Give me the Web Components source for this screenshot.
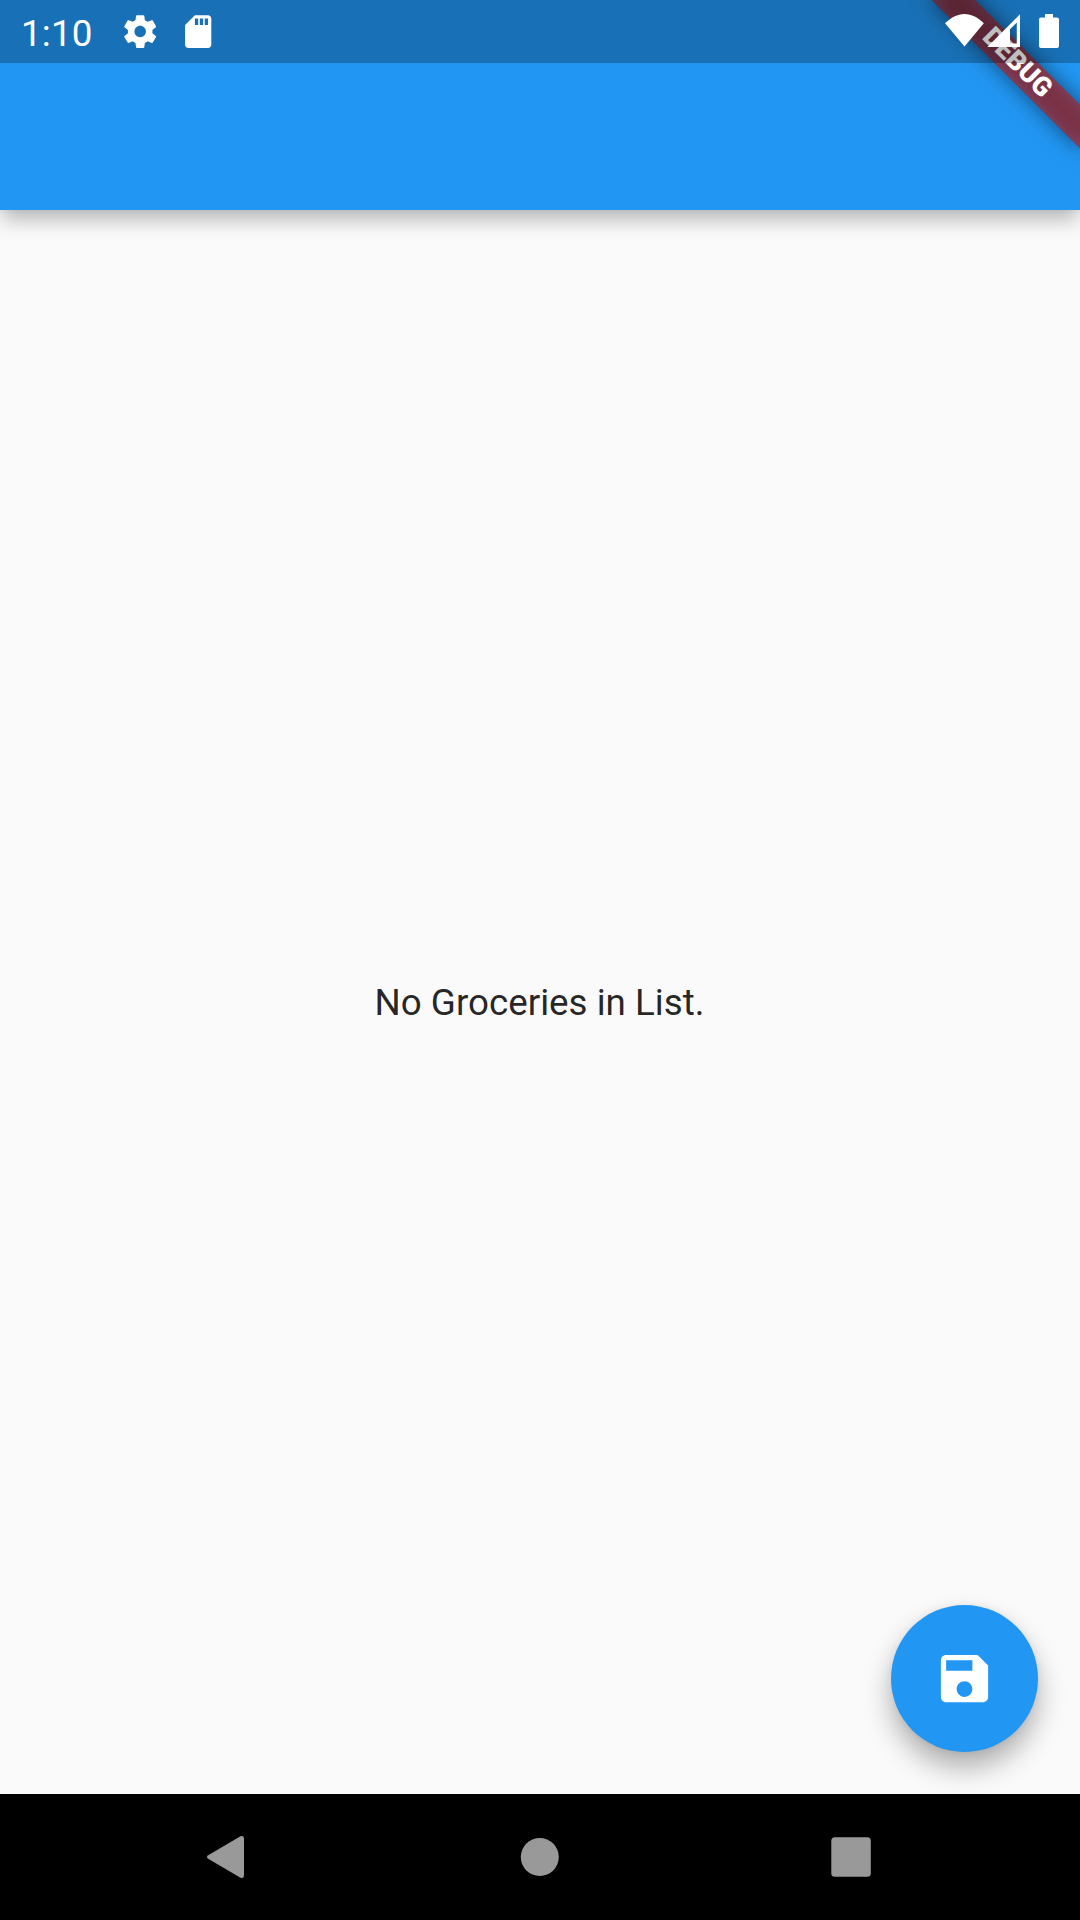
<!DOCTYPE html>
<html lang="en">
<head>
<meta charset="utf-8">
<title>Groceries</title>
<style>
body { margin: 0; background: #fafafa; }
</style>
</head>
<body>
<grocery-app></grocery-app>
<script>
function define(name, html) {
  const template = document.createElement('template');
  template.innerHTML = html;
  customElements.define(name, class extends HTMLElement {
    constructor() {
      super();
      this.attachShadow({ mode: 'open' }).append(template.content.cloneNode(true));
    }
  });
}

define('status-bar', `
<style>
:host { display: flex; justify-content: space-between; height: 63px; box-sizing: border-box; background: rgba(0,0,0,.25); color: #fff; position: relative; z-index: 3; }
.side { display: flex; align-items: center; height: 63px; }
.start { padding-left: 21px; }
.end { padding-right: 20px; }
time { font: 400 36.75px/43px Roboto, sans-serif; letter-spacing: .2px; margin-top: 3px; width: 99px; }
svg { display: block; fill: #fff; }
.icons { width: 100px; height: 63px; }
</style>
<div class="side start">
  <time>1:10</time>
  <svg class="icons" viewBox="120 0 100 63">
    <path transform="translate(120.500 11.900) scale(1.640)" d="M19.43 12.98c.04-.32.07-.64.07-.98s-.03-.66-.07-.98l2.11-1.65c.19-.15.24-.42.12-.64l-2-3.46c-.12-.22-.39-.3-.61-.22l-2.49 1c-.52-.4-1.08-.73-1.69-.98l-.38-2.65C14.46 2.18 14.25 2 14 2h-4c-.25 0-.46.18-.49.42l-.38 2.65c-.61.25-1.17.59-1.69.98l-2.49-1c-.23-.09-.49 0-.61.22l-2 3.46c-.13.22-.07.49.12.64l2.11 1.65c-.04.32-.07.65-.07.98s.03.66.07.98l-2.11 1.65c-.19.15-.24.42-.12.64l2 3.46c.12.22.39.3.61.22l2.49-1c.52.4 1.08.73 1.69.98l.38 2.65c.03.24.24.42.49.42h4c.25 0 .46-.18.49-.42l.38-2.65c.61-.25 1.17-.59 1.69-.98l2.49 1c.23.09.49 0 .61-.22l2-3.46c.12-.22.07-.49-.12-.64l-2.11-1.65zM12 15.500c-1.930 0-3.500-1.570-3.500-3.500s1.570-3.500 3.500-3.500 3.500 1.570 3.500 3.500-1.570 3.500-3.500 3.500z"/>
    <path transform="translate(178.500 11.900) scale(1.640)" d="M18 2h-8L4.02 8 4 20c0 1.1.9 2 2 2h12c1.1 0 2-.9 2-2V4c0-1.1-.9-2-2-2zm-6 6h-2V4h2v4zm3 0h-2V4h2v4zm3 0h-2V4h2v4z"/>
  </svg>
</div>
<div class="side end">
  <svg width="120" height="63" viewBox="940 0 120 63">
    <path d="M945 23.300C951 17.500 957.500 14 964.500 14s13.500 3.500 19.300 9.300L964.500 46.600Z"/>
    <path fill-rule="evenodd" d="M1020 14.300V47H987.300ZM1016.800 22.500L1010 29.200V43.400H1016.800Z"/>
    <path d="M1045 14h8v3.500h4a2 2 0 0 1 2 2V46a2 2 0 0 1-2 2h-16a2 2 0 0 1-2-2V19.500a2 2 0 0 1 2-2h4z"/>
  </svg>
</div>`);

define('debug-banner', `
<style>
:host { display: block; position: absolute; top: 0; right: 0; width: 260px; height: 260px; overflow: hidden; pointer-events: none; z-index: 2; }
.pivot { position: absolute; left: 260px; top: 0; width: 0; height: 0; transform: rotate(45deg); }
.shadow, .band { position: absolute; left: -105px; top: 73.5px; width: 210px; height: 31.5px; }
.shadow { background: rgba(0,0,0,.498); filter: blur(10.4px); }
.band { background: rgba(183,28,28,.627); color: #fff; font: 900 26.775px/29.5px Roboto, sans-serif; text-align: center; }
</style>
<div class="pivot"><div class="shadow"></div><div class="band"><slot></slot></div></div>`);

define('app-bar', `
<style>
:host { display: block; height: 210px; background: #2196f3;
  box-shadow: 0 10.5px 20px -2px rgba(0,0,0,.28), 0 0 6px rgba(0,0,0,.06); }
</style>
<slot></slot>`);

define('empty-message', `
<style>
:host { display: flex; flex: 1; align-items: center; justify-content: center; padding-right: 1px; font: 400 36.75px/43px Roboto, sans-serif; color: rgba(0,0,0,.87); }
</style>
<span><slot></slot></span>`);

define('save-button', `
<style>
:host { display: block; position: absolute; right: 42px; bottom: 42px; }
button { display: flex; align-items: center; justify-content: center; width: 147px; height: 147px; padding: 0; border: 0; border-radius: 50%; background: #2196f3;
  box-shadow: 0 15.75px 29px -1px rgba(0,0,0,.32), 0 0 9px rgba(0,0,0,.06); }
svg { width: 63px; height: 63px; fill: #fff; }
</style>
<button aria-label="Save"><svg viewBox="0 0 24 24"><path d="M17 3H5c-1.11 0-2 .9-2 2v14c0 1.1.89 2 2 2h14c1.1 0 2-.9 2-2V7l-4-4zm-5 16c-1.66 0-3-1.34-3-3s1.34-3 3-3 3 1.34 3 3-1.34 3-3 3zm3-10H5V5h10v4z"/></svg></button>`);

define('nav-bar', `
<style>
:host { display: flex; align-items: center; justify-content: space-between; height: 126px; box-sizing: border-box; padding: 0 208px 0 206px; background: #000; position: relative; }
svg { display: block; fill: #999; }
</style>
<svg width="40" height="44" viewBox="0 0 40 44"><path d="M2.200 20.200L34.500 1.300Q38 .2 38 4V40Q38 43.800 34.500 42.700L2.200 23.800Q-.4 22 2.200 20.200Z"/></svg>
<svg width="40" height="40" viewBox="0 0 40 40"><circle cx="20.800" cy="20" r="19"/></svg>
<svg width="41" height="40" viewBox="0 0 41 40"><rect x=".3" y=".2" width="39.500" height="39.500" rx="3.500"/></svg>`);

define('grocery-app', `
<style>
:host { display: flex; flex-direction: column; width: 1080px; height: 1920px; overflow: hidden; position: relative; background: #fafafa; }
main { display: flex; flex: 1; position: relative; }
</style>
<app-bar><status-bar></status-bar></app-bar>
<debug-banner>DEBUG</debug-banner>
<main><empty-message>No Groceries in List.</empty-message><save-button></save-button></main>
<nav-bar></nav-bar>`);
</script>
</body>
</html>
